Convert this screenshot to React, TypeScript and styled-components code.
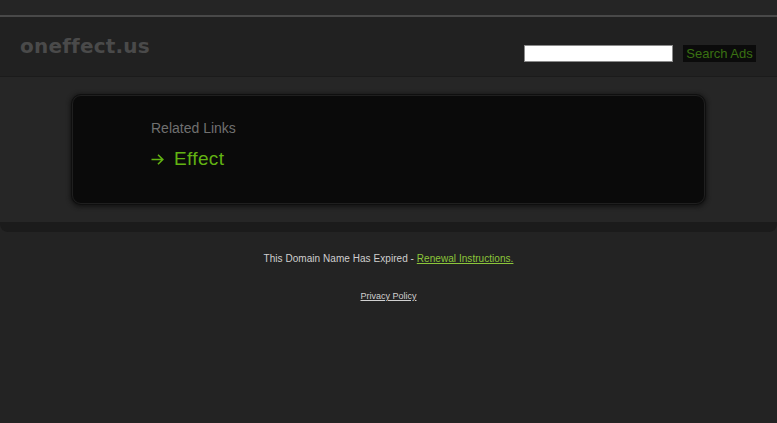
import React from "react";
import styled, { createGlobalStyle } from "styled-components";

const Global = createGlobalStyle`
  html, body { margin: 0; padding: 0; background: #232323; }
  body { font-family: "Liberation Sans", Arial, sans-serif; }
`;

const Page = styled.div`
  width: 100%;
  min-height: 423px;
  background: #232323;
`;

const TopBand = styled.div`
  height: 15px;
  background: #252525;
  border-bottom: 2px solid #494949;
`;

const Header = styled.header`
  height: 59px;
  display: flex;
  justify-content: space-between;
  align-items: flex-start;
  padding: 0 21px 0 20px;
  background: #212121;
  border-bottom: 1px solid #1b1b1b;
`;

const Logo = styled.div`
  margin-top: 19px;
  font-family: "DejaVu Sans", Verdana, sans-serif;
  font-weight: bold;
  font-size: 20px;
  line-height: 20px;
  color: #4a4a4a;
  letter-spacing: 0.2px;
`;

const SearchForm = styled.form`
  margin-top: 28px;
  display: flex;
  gap: 10px;
`;

const SearchInput = styled.input`
  box-sizing: border-box;
  width: 149px;
  height: 17px;
  margin: 0;
  padding: 0 3px;
  border: 1px solid #8a8a8a;
  background: #ffffff;
  outline: none;
`;

const SearchButton = styled.button`
  box-sizing: border-box;
  width: 73px;
  height: 17px;
  margin: 0;
  padding: 0;
  border: none;
  background: #0b0b0b;
  color: #3a7112;
  font-family: "Liberation Sans", Arial, sans-serif;
  font-size: 13px;
  line-height: 17px;
`;

const Main = styled.main`
  display: flex;
  justify-content: center;
  padding: 18px 0 18px;
  background: #262626;
`;

const Card = styled.div`
  box-sizing: border-box;
  width: 633px;
  height: 109px;
  padding: 24px 78px 0;
  background: #0a0a0a;
  border: 1px solid #1f1f1f;
  border-radius: 9px;
  box-shadow: 0 0 0 1px #0f0f0f, 0 1px 4px 2px #141414;
`;

const SectionTitle = styled.div`
  font-size: 14px;
  line-height: 16px;
  color: #707070;
`;

const LinkRow = styled.a`
  margin-top: 12px;
  display: flex;
  align-items: center;
  gap: 10px;
  font-size: 19px;
  line-height: 22px;
  letter-spacing: 0.35px;
  color: #62b312;
  text-decoration: none;
`;

const Strip = styled.div`
  height: 10px;
  background: #1b1b1b;
  border-radius: 0 0 8px 8px;
`;

const Footer = styled.footer`
  padding-top: 21px;
  text-align: center;
`;

const Expired = styled.div`
  font-size: 10px;
  line-height: 12px;
  color: #cfcfcf;
  letter-spacing: 0.05px;
`;

const GreenLink = styled.a`
  color: #8cc63a;
  text-decoration: underline;
`;

const Privacy = styled.a`
  display: inline-block;
  margin-top: 26px;
  font-size: 9px;
  line-height: 11px;
  color: #d0d0d0;
  text-decoration: underline;
`;

const Arrow = () => (
  <svg width="13" height="11" viewBox="0 0 13 11" fill="none">
    <path d="M0.5 5.5H12M7 0.8L11.8 5.5L7 10.2" stroke="#62b312" strokeWidth="1.6" />
  </svg>
);

export default function App() {
  return (
    <Page>
      <Global />
      <TopBand />
      <Header>
        <Logo>oneffect.us</Logo>
        <SearchForm onSubmit={(e) => e.preventDefault()}>
          <SearchInput type="text" />
          <SearchButton type="submit">Search Ads</SearchButton>
        </SearchForm>
      </Header>
      <Main>
        <Card>
          <SectionTitle>Related Links</SectionTitle>
          <LinkRow href="#">
            <Arrow />
            <span>Effect</span>
          </LinkRow>
        </Card>
      </Main>
      <Strip />
      <Footer>
        <Expired>
          This Domain Name Has Expired - <GreenLink href="#">Renewal Instructions.</GreenLink>
        </Expired>
        <Privacy href="#">Privacy Policy</Privacy>
      </Footer>
    </Page>
  );
}
